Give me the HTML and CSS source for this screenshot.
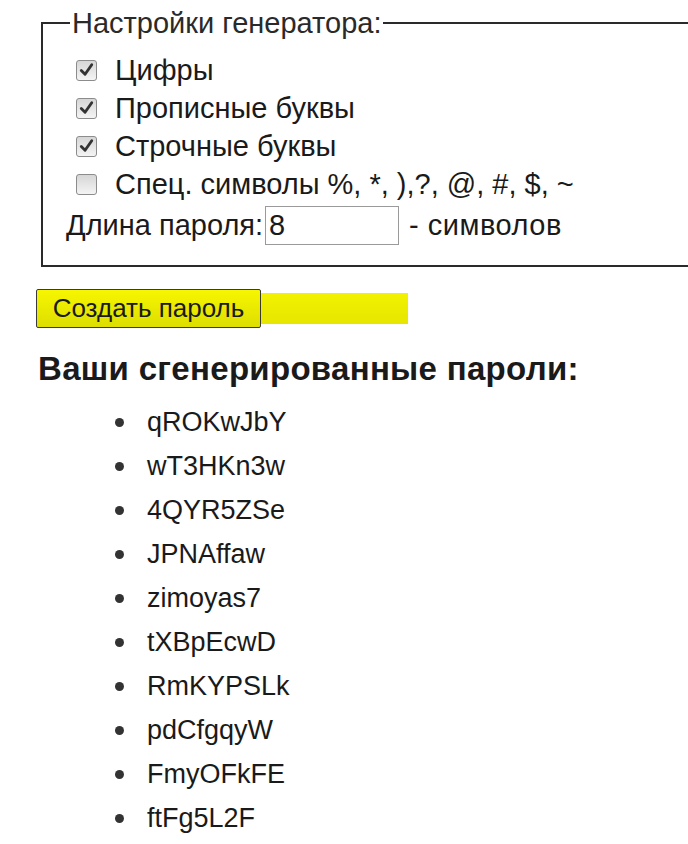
FILE: index.html
```html
<!DOCTYPE html>
<html lang="ru">
<head>
<meta charset="utf-8">
<title>Генератор паролей</title>
<link rel="stylesheet" href="styles.css">
</head>
<body>
<fieldset class="settings">
  <legend class="settings-title">Настройки генератора:</legend>
  <div class="opt">
    <span class="box"><svg viewBox="0 0 20 20" width="20" height="20"><path d="M4.5 10.5 L8.5 14.5 L15.5 4.5" fill="none" stroke="#333" stroke-width="3" stroke-linecap="round" stroke-linejoin="round"/></svg></span>
    <span class="opt-label">Цифры</span>
  </div>
  <div class="opt">
    <span class="box"><svg viewBox="0 0 20 20" width="20" height="20"><path d="M4.5 10.5 L8.5 14.5 L15.5 4.5" fill="none" stroke="#333" stroke-width="3" stroke-linecap="round" stroke-linejoin="round"/></svg></span>
    <span class="opt-label">Прописные буквы</span>
  </div>
  <div class="opt">
    <span class="box"><svg viewBox="0 0 20 20" width="20" height="20"><path d="M4.5 10.5 L8.5 14.5 L15.5 4.5" fill="none" stroke="#333" stroke-width="3" stroke-linecap="round" stroke-linejoin="round"/></svg></span>
    <span class="opt-label">Строчные буквы</span>
  </div>
  <div class="opt">
    <span class="box"></span>
    <span class="opt-label">Спец. символы %, *, ),?, @, #, $, ~</span>
  </div>
  <div class="len-row">
    <span>Длина пароля:</span><span class="len-input">8</span><span class="len-suffix">- символов</span>
  </div>
</fieldset>

<div class="action">
  <button class="create-btn" type="button">Создать пароль</button>
</div>

<h2 class="result-title">Ваши сгенерированные пароли:</h2>
<ul class="pw-list">
  <li>qROKwJbY</li>
  <li>wT3HKn3w</li>
  <li>4QYR5ZSe</li>
  <li>JPNAffaw</li>
  <li>zimoyas7</li>
  <li>tXBpEcwD</li>
  <li>RmKYPSLk</li>
  <li>pdCfgqyW</li>
  <li>FmyOFkFE</li>
  <li>ftFg5L2F</li>
</ul>
</body>
</html>
```

FILE: styles.css
```css
html, body {
  margin: 0;
  padding: 0;
  background: #ffffff;
  overflow: hidden;
}

body {
  font-family: "Liberation Sans", Arial, sans-serif;
  color: #1a1a1a;
  width: 688px;
  height: 844px;
  padding-top: 7px;
  box-sizing: border-box;
}

.settings {
  margin: 0 -2px 0 41px;
  box-sizing: border-box;
  border: 2px solid #2a2a2a;
  padding: 12px 0 18px 23px;
  min-width: 0;
}

.settings-title {
  font-size: 29px;
  line-height: 32px;
  padding: 0 2px;
  margin-left: 4px;
  color: #2a2a2a;
}

.opt {
  display: flex;
  align-items: center;
  height: 38px;
  font-size: 29px;
}

.box {
  width: 19px;
  height: 19px;
  margin-left: 10px;
  margin-right: 18px;
  border: 1px solid #8c8c8c;
  border-radius: 3px;
  background: linear-gradient(#d6d6d6, #f4f4f4);
  display: flex;
  align-items: center;
  justify-content: center;
  flex-shrink: 0;
}

.opt-label {
  white-space: nowrap;
}

.len-row {
  display: flex;
  align-items: center;
  font-size: 29px;
  height: 44px;
  white-space: nowrap;
}

.len-input {
  display: inline-block;
  box-sizing: border-box;
  width: 134px;
  height: 39px;
  line-height: 37px;
  border: 1px solid #9a9a9a;
  padding-left: 3px;
  margin-left: 2px;
  background: #fff;
}

.len-suffix {
  margin-left: 10px;
  letter-spacing: 0.5px;
}

.action {
  margin: 22px 0 0 36px;
  width: 372px;
  height: 39px;
  display: flex;
  align-items: center;
}

.action::after {
  content: "";
  flex: 1;
  height: 31px;
  background: linear-gradient(#f2f200, #e6e600);
}

.create-btn {
  font-family: "Liberation Sans", Arial, sans-serif;
  font-size: 26px;
  color: #1a1a1a;
  width: 225px;
  height: 39px;
  padding: 0;
  border: 1px solid #3a3a3a;
  border-radius: 2px;
  background: linear-gradient(#f6f600, #dede00);
  cursor: pointer;
}

.result-title {
  font-size: 33px;
  font-weight: bold;
  letter-spacing: 0.3px;
  line-height: 38px;
  margin: 22px 0 0 38px;
  color: #1a1a1a;
}

.pw-list {
  list-style: none;
  margin: 12px 0 0 0;
  padding: 0 0 0 115px;
}

.pw-list li {
  font-size: 27px;
  height: 44px;
  line-height: 44px;
  display: flex;
  align-items: center;
}

.pw-list li::before {
  content: "";
  width: 9px;
  height: 9px;
  border-radius: 50%;
  background: #333;
  margin-right: 23px;
}
```
